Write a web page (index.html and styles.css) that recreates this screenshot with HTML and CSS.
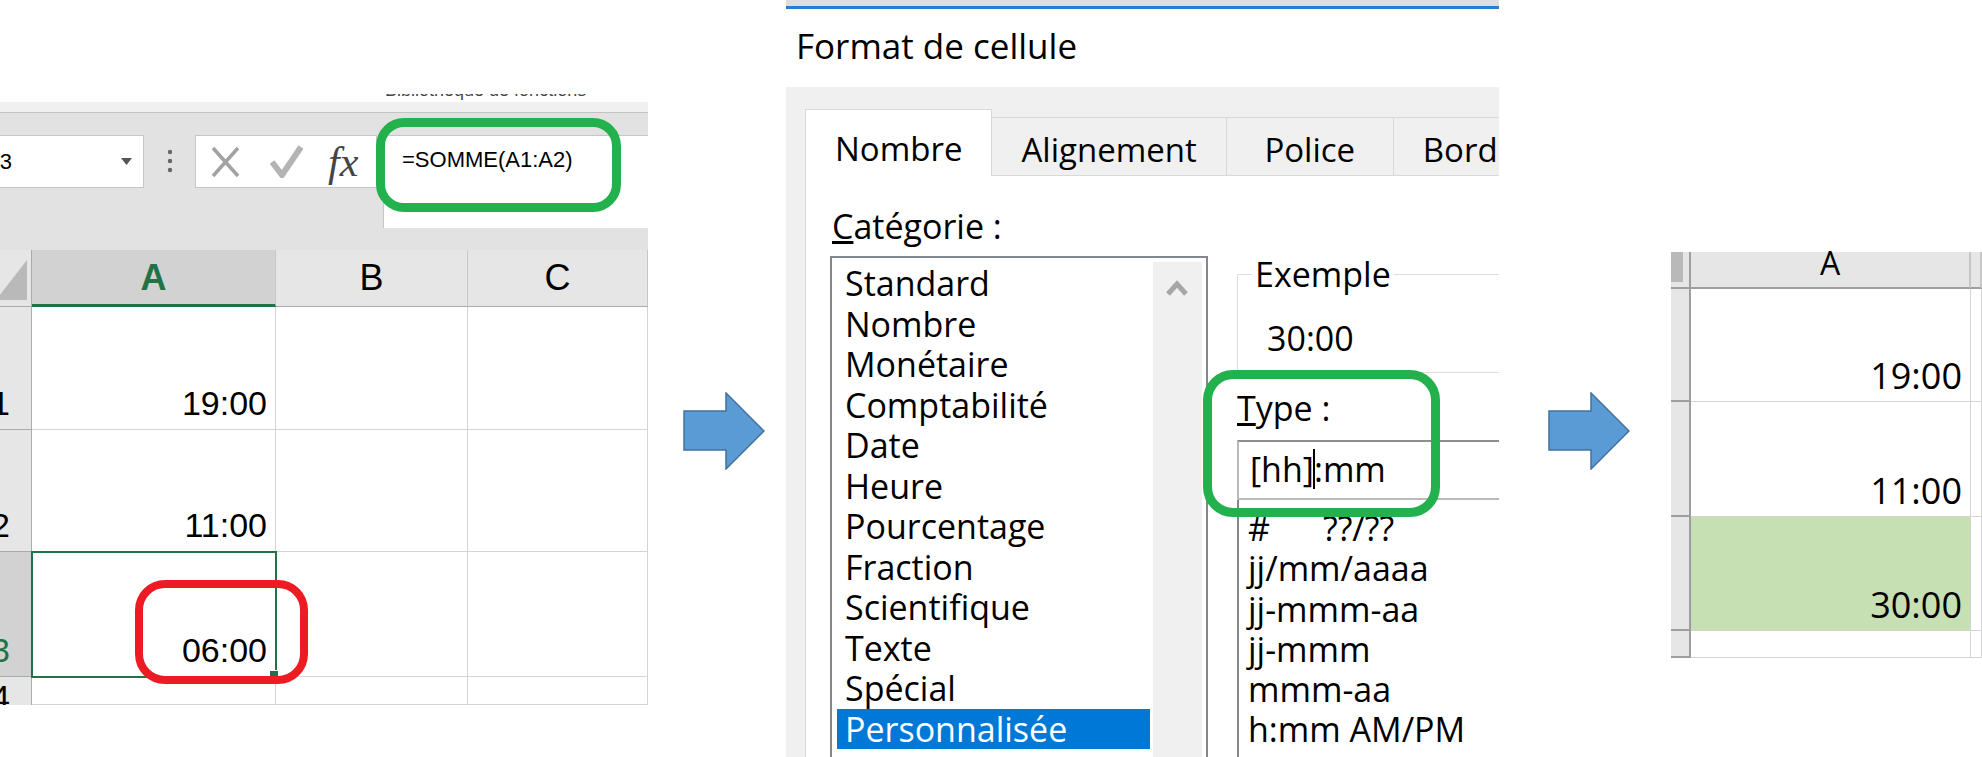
FILE: index.html
```html
<!DOCTYPE html>
<html lang="fr">
<head>
    <meta charset="UTF-8">
    <title>Somme d'heures au-delà de 24h</title>
    <link rel="stylesheet" href="styles.css">
</head>
<body>
<div class="page">

    <!-- Step 1: the sum in Excel shows 06:00 -->
    <div class="excel">
        <div class="ribbon-edge"><span class="group-label">Bibliothèque de fonctions</span></div>
        <div class="formula-bar">
            <div class="name-box">
                <span class="cell-ref">A3</span>
                <svg class="name-caret" width="11" height="7" viewBox="0 0 11 7"><polygon points="0,0 11,0 5.5,7" fill="#555"/></svg>
            </div>
            <svg class="bar-dots" width="8" height="53" viewBox="0 0 8 53"><circle cx="4" cy="17" r="2.2" fill="#666"/><circle cx="4" cy="26" r="2.2" fill="#666"/><circle cx="4" cy="35" r="2.2" fill="#666"/></svg>
            <div class="fx-buttons">
                <svg width="29" height="32" viewBox="0 0 29 32"><path d="M2 2 L27 30 M27 2 L2 30" stroke="#a2a2a2" stroke-width="3.5" fill="none"/></svg>
                <svg class="btn-check" width="33" height="33" viewBox="0 0 33 33"><path d="M2 17 L12 30 L31 2" stroke="#b4b4b4" stroke-width="6" fill="none"/></svg>
                <span class="fx">fx</span>
            </div>
            <div class="formula-input">=SOMME(A1:A2)</div>
        </div>
        <div class="sheet">
            <div class="corner"><svg width="27" height="56" viewBox="0 0 27 56"><polygon points="27,10 27,50 -4,50" fill="#b9b9b9"/></svg></div>
            <div class="col-head active">A</div>
            <div class="col-head">B</div>
            <div class="col-head">C</div>

            <div class="row-head"><span>1</span></div>
            <div class="cell">19:00</div>
            <div class="cell"></div>
            <div class="cell"></div>

            <div class="row-head"><span>2</span></div>
            <div class="cell">11:00</div>
            <div class="cell"></div>
            <div class="cell"></div>

            <div class="row-head active"><span>3</span></div>
            <div class="cell selected">06:00</div>
            <div class="cell"></div>
            <div class="cell"></div>

            <div class="row-head last"><span>4</span></div>
            <div class="cell"></div>
            <div class="cell"></div>
            <div class="cell"></div>
        </div>
        <div class="mark mark-formula"></div>
        <div class="mark mark-result"></div>
    </div>

    <svg class="arrow arrow-first" width="82" height="78" viewBox="0 0 82 78"><polygon points="1,19 43,19 43,1 81,39 43,77 43,58 1,58" fill="#5b9bd5" stroke="#41719c" stroke-width="1.5"/></svg>

    <!-- Step 2: custom format [hh]:mm -->
    <div class="dialog">
        <div class="dialog-title">Format de cellule</div>
        <div class="dialog-body">
            <div class="tabs">
                <div class="tab active">Nombre</div>
                <div class="tab">Alignement</div>
                <div class="tab">Police</div>
                <div class="tab">Bordure</div>
            </div>
            <div class="tab-page">
                <div class="category">
                    <div class="field-label"><u>C</u>atégorie :</div>
                    <div class="listbox">
                        <ul class="options">
                            <li>Standard</li>
                            <li>Nombre</li>
                            <li>Monétaire</li>
                            <li>Comptabilité</li>
                            <li>Date</li>
                            <li>Heure</li>
                            <li>Pourcentage</li>
                            <li>Fraction</li>
                            <li>Scientifique</li>
                            <li>Texte</li>
                            <li>Spécial</li>
                            <li class="selected">Personnalisée</li>
                        </ul>
                        <div class="scrollbar">
                            <svg width="24" height="18" viewBox="0 0 24 18"><path d="M3 15 L12 5 L21 15" stroke="#a6a6a6" stroke-width="5" fill="none"/></svg>
                        </div>
                    </div>
                </div>
                <div class="format">
                    <fieldset class="sample">
                        <legend>Exemple</legend>
                        <div class="sample-value">30:00</div>
                    </fieldset>
                    <div class="type-label"><u>T</u>ype :</div>
                    <div class="type-input">[hh]<span class="cursor"></span>:mm</div>
                    <ul class="type-list">
                        <li>#      ??/??</li>
                        <li>jj/mm/aaaa</li>
                        <li>jj-mmm-aa</li>
                        <li>jj-mmm</li>
                        <li>mmm-aa</li>
                        <li>h:mm AM/PM</li>
                    </ul>
                </div>
            </div>
        </div>
        <div class="mark mark-type"></div>
    </div>

    <svg class="arrow arrow-second" width="82" height="78" viewBox="0 0 82 78"><polygon points="1,19 43,19 43,1 81,39 43,77 43,58 1,58" fill="#5b9bd5" stroke="#41719c" stroke-width="1.5"/></svg>

    <!-- Step 3: result 30:00 -->
    <div class="result">
        <div class="res-corner"><div class="corner-mark"></div></div>
        <div class="res-col">A</div>
        <div class="res-col"></div>

        <div class="res-row"></div>
        <div class="res-cell">19:00</div>
        <div class="res-cell"></div>

        <div class="res-row"></div>
        <div class="res-cell">11:00</div>
        <div class="res-cell"></div>

        <div class="res-row"></div>
        <div class="res-cell total">30:00</div>
        <div class="res-cell"></div>

        <div class="res-row"></div>
        <div class="res-cell"></div>
        <div class="res-cell"></div>
    </div>

</div>
</body>
</html>
```

FILE: styles.css
```css
* {
    box-sizing: border-box;
}
body {
    margin: 0;
    background: #fff;
    color: #000;
    font-family: "Liberation Sans", Arial, sans-serif;
}
.page {
    display: flex;
    align-items: flex-start;
    width: 1982px;
    height: 757px;
    overflow: hidden;
}

/* ---- left: excel ---- */
.excel {
    position: relative;
    flex-shrink: 0;
    width: 648px;
    height: 757px;
    padding-top: 94px;
}
.ribbon-edge {
    height: 19px;
    overflow: hidden;
    background: linear-gradient(#fff 8px, #f0f0f0 8px);
    border-bottom: 1px solid #c3c3c3;
}
.group-label {
    display: block;
    margin: -14px 0 0 385px;
    font-size: 18px;
    line-height: 20px;
    color: #444;
    white-space: nowrap;
}
.formula-bar {
    display: flex;
    align-items: flex-start;
    height: 137px;
    padding-top: 22px;
    background: #e2e2e2;
}
.name-box {
    display: flex;
    align-items: center;
    width: 144px;
    height: 53px;
    overflow: hidden;
    background: #fff;
    border: 1px solid #c6c6c6;
    border-left: 0;
    font-size: 22px;
}
.cell-ref {
    margin-left: -15px;
}
.name-caret {
    margin-left: auto;
    margin-right: 11px;
}
.bar-dots {
    margin-left: 22px;
}
.fx-buttons {
    display: flex;
    align-items: center;
    width: 182px;
    height: 53px;
    margin-left: 21px;
    padding-left: 15px;
    background: #fff;
    border: 1px solid #c6c6c6;
}
.btn-check {
    margin-left: 30px;
}
.fx {
    margin-left: 25px;
    font-family: "Liberation Serif", serif;
    font-style: italic;
    font-size: 42px;
    color: #444;
}
.formula-input {
    flex: 1;
    height: 93px;
    margin-left: 6px;
    padding: 11px 0 0 18px;
    background: #fff;
    border-top: 1px solid #c6c6c6;
    border-left: 1px solid #c6c6c6;
    font-size: 22px;
    line-height: 26px;
}
.sheet {
    display: grid;
    grid-template-columns: 32px 244px 192px 180px;
    grid-template-rows: 57px 123px 122px 125px 28px;
}
.corner {
    background: #e6e6e6;
    border-right: 1px solid #ababab;
    border-bottom: 1px solid #ababab;
}
.corner svg {
    display: block;
}
.col-head {
    display: flex;
    justify-content: center;
    padding-top: 8px;
    background: #e6e6e6;
    border-right: 1px solid #c6c6c6;
    border-bottom: 1px solid #ababab;
    font-size: 36px;
    line-height: 40px;
}
.col-head.active {
    background: #d2d2d2;
    border-bottom: 3px solid #217346;
    color: #217346;
    font-weight: bold;
}
.row-head {
    display: flex;
    align-items: flex-end;
    padding-bottom: 6px;
    overflow: hidden;
    background: #e6e6e6;
    border-right: 1px solid #ababab;
    border-bottom: 1px solid #ababab;
    font-size: 34px;
    line-height: 40px;
}
.row-head span {
    margin-left: -9px;
}
.row-head.active {
    background: #d2d2d2;
    color: #217346;
}
.row-head.last {
    align-items: flex-start;
    padding: 0;
    border-bottom: 0;
}
.cell {
    display: flex;
    align-items: flex-end;
    justify-content: flex-end;
    padding: 0 8px 6px 0;
    border-right: 1px solid #d4d4d4;
    border-bottom: 1px solid #d4d4d4;
    font-size: 34px;
    line-height: 40px;
}
.cell.selected {
    position: relative;
    outline: 2px solid #217346;
    outline-offset: -1px;
}
.cell.selected::after {
    content: "";
    position: absolute;
    right: -4px;
    bottom: -4px;
    width: 8px;
    height: 8px;
    background: #217346;
    border: 1px solid #fff;
}

/* hand drawn highlight boxes */
.mark {
    position: absolute;
    border-radius: 30px;
}
.mark-formula {
    left: 376px;
    top: 118px;
    width: 245px;
    height: 94px;
    border: 9px solid #22b14c;
    border-radius: 28px;
}
.mark-result {
    left: 135px;
    top: 580px;
    width: 173px;
    height: 104px;
    border: 8px solid #ed1c24;
}
.mark-type {
    left: 417px;
    top: 364px;
    width: 237px;
    height: 147px;
    border: 9px solid #22b14c;
}

.arrow {
    flex-shrink: 0;
    margin-top: 392px;
}
.arrow-first {
    margin-left: 35px;
}
.arrow-second {
    margin-left: 49px;
}

/* ---- middle: format dialog ---- */
.dialog {
    position: relative;
    flex-shrink: 0;
    width: 713px;
    height: 757px;
    margin-left: 21px;
    overflow: hidden;
    border-top: 6px solid #dedede;
    font-family: "Open Sans", "Noto Sans", sans-serif;
    font-size: 34px;
}
.dialog-title {
    height: 81px;
    padding: 17px 0 0 10px;
    border-top: 3px solid #2b7cd3;
    background: #fff;
    font-size: 35px;
    line-height: 40px;
}
.dialog-body {
    height: 670px;
    padding: 22px 0 0 19px;
    background: #f0f0f0;
}
.tabs {
    display: flex;
    align-items: flex-end;
    height: 67px;
}
.tab {
    flex-shrink: 0;
    min-width: 167px;
    height: 59px;
    padding: 12px 29px 0;
    border: 1px solid #d9d9d9;
    border-left: 0;
    text-align: center;
    font-size: 33px;
    line-height: 40px;
    white-space: nowrap;
}
.tab.active {
    height: 67px;
    padding-top: 19px;
    background: #fff;
    border-left: 1px solid #d9d9d9;
    border-bottom: 0;
}
.tab-page {
    display: flex;
    align-items: flex-start;
    height: 581px;
    padding: 30px 0 0 24px;
    background: #fff;
    border-left: 1px solid #d9d9d9;
}
.category {
    flex-shrink: 0;
    width: 378px;
}
.field-label {
    margin-bottom: 10px;
    padding-left: 2px;
    line-height: 40px;
}
.listbox {
    display: flex;
    height: 520px;
    border: 2px solid #828790;
    border-bottom: 0;
}
.options {
    flex: 1;
    margin: 0;
    padding: 5px 3px 0 5px;
    list-style: none;
    line-height: 40.5px;
}
.options li {
    padding-left: 8px;
}
.options li.selected {
    background: #0078d7;
    color: #fff;
}
.scrollbar {
    width: 49px;
    margin: 4px 4px 0 0;
    padding: 17px 0 0 12px;
    background: #f0f0f0;
}
.scrollbar svg {
    display: block;
}
.format {
    flex: 1;
    margin: 50px 0 0 29px;
}
.sample {
    height: 117px;
    margin: 0;
    padding: 26px 0 0 12px;
    border: 1px solid #dcdcdc;
    border-right: 0;
}
.sample legend {
    margin-left: 2px;
    padding: 0 3px;
    line-height: 36px;
}
.sample-value {
    padding-left: 17px;
    line-height: 40px;
}
.type-label {
    margin: 15px 0 12px;
    line-height: 40px;
}
.type-input {
    height: 60px;
    padding: 7px 0 0 11px;
    border: 2px solid #b9b9b9;
    border-top-color: #8e8e8e;
    border-right: 0;
    line-height: 40px;
    white-space: nowrap;
}
.cursor {
    display: inline-block;
    width: 2px;
    height: 40px;
    margin: 0 -1px;
    vertical-align: top;
    background: #000;
}
.type-list {
    height: 260px;
    margin: 0;
    padding: 8px 0 0 9px;
    list-style: none;
    border-left: 2px solid #828790;
    line-height: 40.3px;
}
.type-list li {
    white-space: pre;
}

/* ---- right: result ---- */
.result {
    display: grid;
    flex-shrink: 0;
    grid-template-columns: 20px 280px 11px;
    grid-template-rows: 37px 113px 115px 114px 27px;
    width: 311px;
    margin: 252px 0 0 41px;
    font-family: "Open Sans", "Noto Sans", sans-serif;
    font-size: 36px;
}
.res-corner {
    background: #e6e6e6;
    border-right: 2px solid #9e9e9e;
    border-bottom: 2px solid #9e9e9e;
}
.corner-mark {
    width: 12px;
    height: 30px;
    background: #b9b9b9;
}
.res-col {
    background: #e6e6e6;
    border-right: 2px solid #c6c6c6;
    border-bottom: 2px solid #9e9e9e;
    text-align: center;
    font-size: 32px;
    line-height: 22px;
}
.res-row {
    background: #e6e6e6;
    border-right: 2px solid #9e9e9e;
    border-bottom: 2px solid #9e9e9e;
}
.res-cell {
    display: flex;
    align-items: flex-end;
    justify-content: flex-end;
    padding: 0 8px 5px 0;
    border-right: 1px solid #d4d4d4;
    border-bottom: 1px solid #d4d4d4;
    line-height: 40px;
}
.res-cell.total {
    background: #c6e0b4;
}
```
